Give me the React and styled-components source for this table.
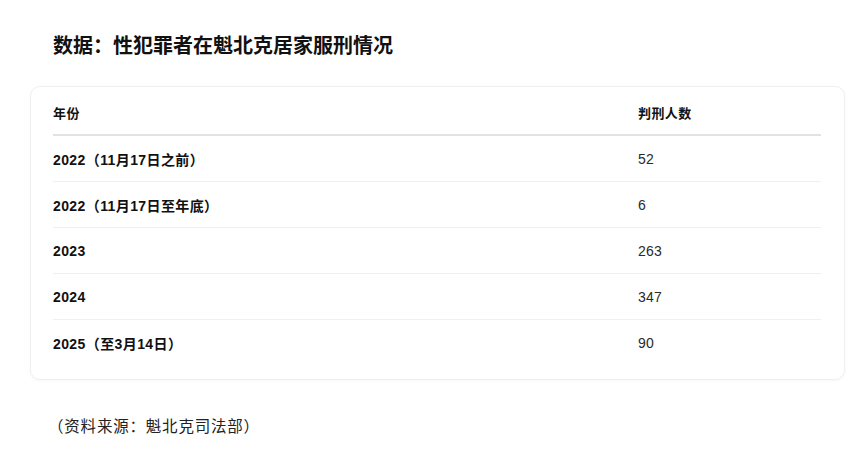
import React from 'react'
import styled, { createGlobalStyle } from 'styled-components'

const GlobalStyle = createGlobalStyle`
  html, body {
    margin: 0;
    padding: 0;
    background: #fff;
  }
  body {
    font-family: "Liberation Sans", "Noto Sans CJK SC", sans-serif;
    color: #111;
  }
`

const rows = [
  { year: '2022（11月17日之前）', count: '52' },
  { year: '2022（11月17日至年底）', count: '6' },
  { year: '2023', count: '263' },
  { year: '2024', count: '347' },
  { year: '2025（至3月14日）', count: '90' },
]

const Page = styled.main`
  width: 858px;
  height: 462px;
  box-sizing: border-box;
  padding: 33px 13px 0 30px;
`

const Title = styled.h2`
  margin: 0 0 27px 23px;
  font-size: 20px;
  line-height: 26px;
  font-weight: 700;
  color: #111;
`

const Card = styled.section`
  border: 1px solid #efefef;
  border-radius: 10px;
  box-shadow: 0 1px 3px rgba(0, 0, 0, 0.04);
  padding: 3px 23px 13px 22px;
`

const Row = styled.div`
  box-sizing: border-box;
  display: grid;
  grid-template-columns: 585px 1fr;
  align-items: center;
  height: 46px;
  border-bottom: ${(p) => (p.$head ? '2px solid #e2e2e2' : p.$last ? 'none' : '1px solid #f0f0f0')};
  font-size: ${(p) => (p.$head ? '13px' : '14px')};
`

const Cell = styled.div`
  font-weight: ${(p) => (p.$bold ? 700 : 400)};
  color: ${(p) => (p.$bold ? '#111' : '#2a2a2a')};
  letter-spacing: ${(p) => (p.$bold ? '0.4px' : '0.2px')};
`

const Source = styled.p`
  margin: 34px 0 0 18px;
  font-size: 15.5px;
  letter-spacing: 0.8px;
  color: #222;
`

const App = () => {
  return (
    <Page>
      <GlobalStyle />
      <Title>数据：性犯罪者在魁北克居家服刑情况</Title>
      <Card>
        <Row $head>
          <Cell $bold>年份</Cell>
          <Cell $bold>判刑人数</Cell>
        </Row>
        {rows.map((r, i) => (
          <Row key={r.year} $last={i === rows.length - 1}>
            <Cell $bold>{r.year}</Cell>
            <Cell>{r.count}</Cell>
          </Row>
        ))}
      </Card>
      <Source>（资料来源：魁北克司法部）</Source>
    </Page>
  )
}

export default App
